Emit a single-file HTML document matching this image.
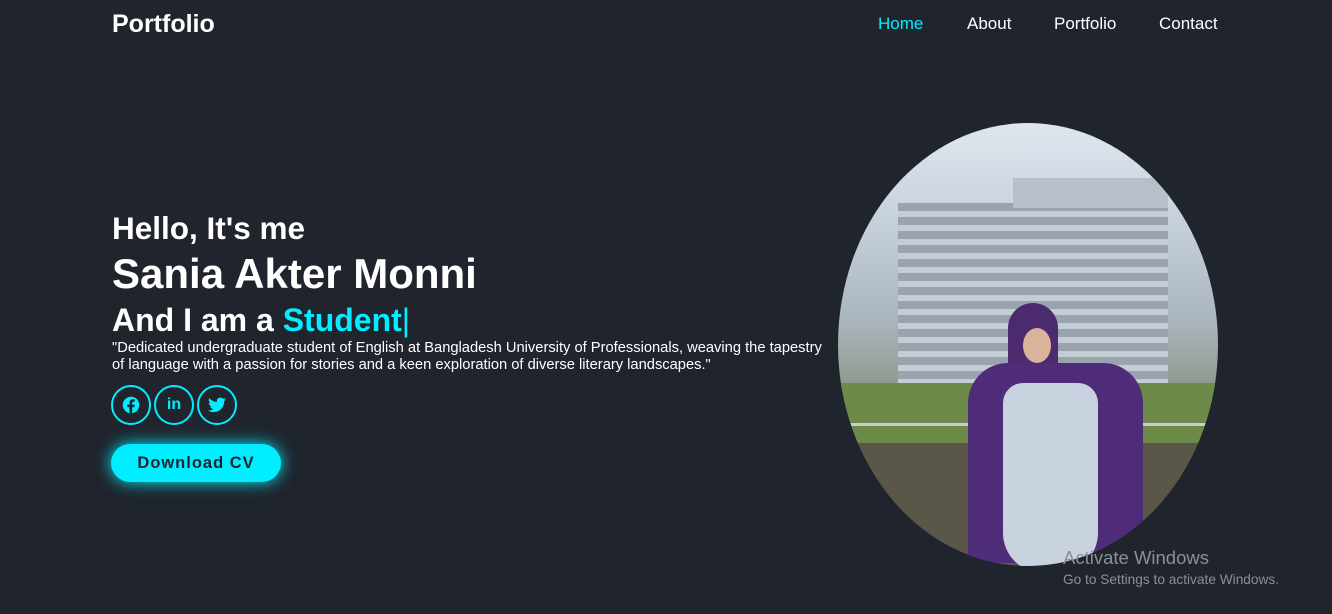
<!DOCTYPE html>
<html><head><meta charset="utf-8"><style>
*{margin:0;padding:0;box-sizing:border-box}
body{width:1332px;height:614px;background:#1f242d;font-family:"Liberation Sans",Arial,sans-serif;color:#fff;position:relative;overflow:hidden}
.logo{position:absolute;left:112px;top:10px;font-size:25px;font-weight:bold}
nav{position:absolute;top:14px;font-size:17px}
nav a{position:absolute;color:#fff;text-decoration:none;white-space:nowrap}
h3{position:absolute;left:112px;font-weight:bold;white-space:nowrap}
.p{position:absolute;left:112px;top:340px;font-size:14.7px;line-height:17px;width:726px}
.s{position:absolute;top:385px;width:40px;height:40px;border:2px solid #0ef;border-radius:50%;display:flex;align-items:center;justify-content:center}
.btn{position:absolute;left:111px;top:444px;width:170px;height:38px;border-radius:20px;background:#0ef;box-shadow:0 0 16px #0ef;color:#1f242d;font-weight:bold;font-size:16.5px;letter-spacing:1px;display:flex;align-items:center;justify-content:center}
.img{position:absolute;left:838px;top:123px;width:380px;height:443px;border-radius:50%;overflow:hidden;background:linear-gradient(#dfe6ee 0%,#c9d3de 20%,#aab4bd 45%,#8e9a8a 60%,#6f8a4c 68%,#5c7a3a 78%,#6b6a55 90%,#4a4a40 100%)}
.wm{position:absolute;left:1063px;color:#8b8f96}
</style></head><body>
<div class="logo">Portfolio</div>
<nav><a style="left:878px;color:#0ef">Home</a><a style="left:967px">About</a><a style="left:1054px">Portfolio</a><a style="left:1159px">Contact</a></nav>
<h3 style="top:210px;font-size:31.5px">Hello, It's me</h3>
<h3 style="top:250px;font-size:42px">Sania Akter Monni</h3>
<h3 style="top:302px;font-size:32px">And I am a <span style="color:#0ef">Student</span><span style="color:#0ef;font-weight:normal">|</span></h3>
<div class="p">"Dedicated undergraduate student of English at Bangladesh University of Professionals, weaving the tapestry of language with a passion for stories and a keen exploration of diverse literary landscapes."</div>
<div class="s" style="left:111px"><svg width="18" height="18" viewBox="0 0 24 24"><circle cx="12" cy="12" r="11" fill="#0ef"/><path d="M13.5 24V15h3l.5-3.5h-3.5V9.3c0-1 .3-1.700 1.8-1.7H17V4.5c-.3 0-1.4-.1-2.6-.1-2.6 0-4.3 1.6-4.3 4.4v2.7H7V15h3v9z" fill="#1f242d"/></svg></div>
<div class="s" style="left:154px;color:#0ef;font-weight:bold;font-size:16px">in</div>
<div class="s" style="left:197px"><svg width="18" height="16" viewBox="0 0 24 20"><path d="M24 2.4a10 10 0 0 1-2.8.8A5 5 0 0 0 23.3.5a10 10 0 0 1-3.1 1.2A4.9 4.9 0 0 0 11.8 6 14 14 0 0 1 1.7.9a4.9 4.9 0 0 0 1.5 6.6A4.9 4.9 0 0 1 1 6.9 4.9 4.9 0 0 0 4.9 11.8a5 5 0 0 1-2.2.1 4.9 4.9 0 0 0 4.6 3.4A9.9 9.9 0 0 1 0 17.3 14 14 0 0 0 7.5 19.5c9.1 0 14-7.5 14-14v-.6A10 10 0 0 0 24 2.4z" fill="#0ef"/></svg></div>
<div class="btn">Download CV</div>
<div class="img">
<div style="position:absolute;left:60px;top:80px;width:270px;height:190px;background:repeating-linear-gradient(#9aa4ae 0 8px,#c4ccd4 8px 14px)"></div>
<div style="position:absolute;left:175px;top:55px;width:155px;height:30px;background:#b7c0c8"></div>
<div style="position:absolute;left:0;top:260px;width:380px;height:60px;background:#6e8a48"></div>
<div style="position:absolute;left:0;top:300px;width:380px;height:3px;background:#c8cdd2"></div>
<div style="position:absolute;left:0;top:320px;width:380px;height:130px;background:#5a5648"></div>
<div style="position:absolute;left:170px;top:180px;width:50px;height:80px;border-radius:25px 25px 10px 10px;background:#4b2a6e"></div>
<div style="position:absolute;left:130px;top:240px;width:175px;height:200px;border-radius:40px 40px 10px 10px;background:#4e2c7a"></div>
<div style="position:absolute;left:165px;top:260px;width:95px;height:190px;border-radius:20px 20px 40px 40px;background:#c9d3df"></div>
<div style="position:absolute;left:185px;top:205px;width:28px;height:35px;border-radius:50%;background:#d9b39a"></div>
</div>
<div class="wm" style="top:547px;font-size:18.5px">Activate Windows</div>
<div class="wm" style="top:572px;font-size:13.7px">Go to Settings to activate Windows.</div>
</body></html>
